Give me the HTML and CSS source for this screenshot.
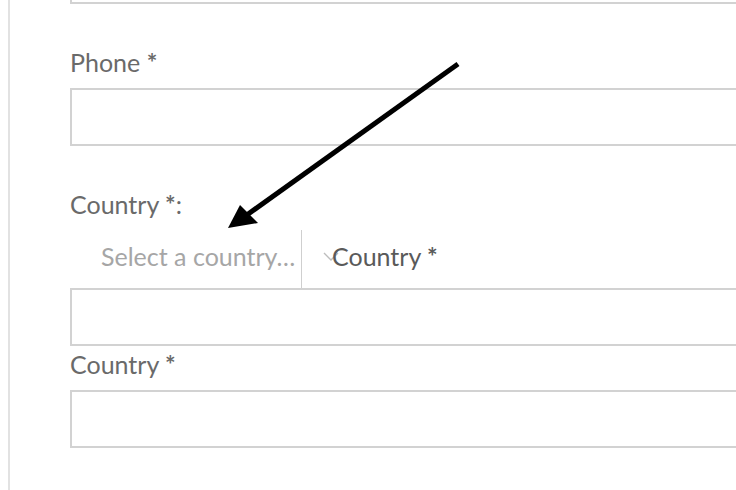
FILE: index.html
```html
<!DOCTYPE html>
<html>
<head>
<meta charset="utf-8">
<link rel="stylesheet" href="styles.css">
</head>
<body>
<div class="page">
  <form class="form">
    <div class="field field-first">
      <div class="input"></div>
    </div>
    <div class="field">
      <label class="label">Phone <span class="req">*</span></label>
      <div class="input"></div>
    </div>
    <div class="field">
      <label class="label">Country <span class="req">*</span>:</label>
      <div class="select-row">
        <div class="select">Select a country…</div>
        <div class="select-after">
          <svg class="chevron" width="16" height="10" viewBox="0 0 16 10"><polyline points="1,1 8,8 15,1" fill="none" stroke="#bdbdbd" stroke-width="1.4"/></svg>
          <span class="inline-label">Country <span class="req">*</span></span>
        </div>
      </div>
      <div class="input"></div>
      <label class="label label-tight">Country <span class="req">*</span></label>
      <div class="input"></div>
    </div>
  </form>
  <svg class="arrow" width="736" height="490" viewBox="0 0 736 490">
    <line x1="458" y1="64" x2="244" y2="217" stroke="#000" stroke-width="5"/>
    <polygon points="228,228 240,205 258,223" fill="#000"/>
  </svg>
</div>
</body>
</html>
```
FILE: styles.css
```css
html, body {
  margin: 0;
  padding: 0;
  overflow: hidden;
  background: #fff;
}
.page {
  position: relative;
  width: 736px;
  height: 490px;
  overflow: hidden;
}
.form {
  display: flow-root;
  margin-left: 8px;
  border-left: 2px solid #e2e2e2;
  height: 490px;
  padding-left: 60px;
  font-family: Lato, "Open Sans", sans-serif;
  font-size: 25px;
  color: #6a6a6a;
}
.field {
  display: flex;
  flex-direction: column;
  width: 720px;
  margin-bottom: 43px;
}
.field-first {
  margin-top: -54px;
}
.label {
  display: block;
  line-height: 30px;
  margin-bottom: 11px;
}
.req {
  font-weight: 700;
}
.label-tight {
  margin-top: 3px;
}
.input {
  height: 54px;
  border: 2px solid #d2d2d2;
  background: #fff;
}
.select-row {
  display: flex;
  height: 58px;
}
.select {
  width: 200px;
  padding-left: 31px;
  padding-top: 11px;
  line-height: 30px;
  color: #a6a6a6;
  border-right: 1px solid #cfcfcf;
  white-space: nowrap;
}
.select-after {
  position: relative;
  padding-left: 30px;
  padding-top: 11px;
  line-height: 30px;
}
.chevron {
  position: absolute;
  left: 21px;
  top: 22px;
}
.inline-label {
  position: relative;
  color: #5a5a5a;
}
.arrow {
  position: absolute;
  left: 0;
  top: 0;
  pointer-events: none;
}
```
